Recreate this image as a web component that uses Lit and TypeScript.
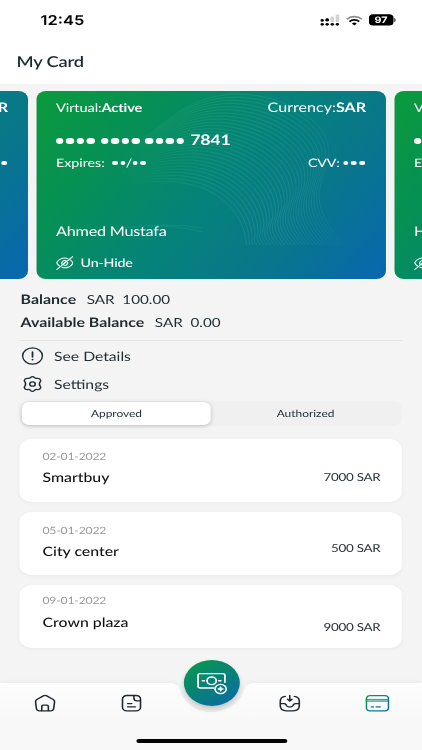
import { LitElement, html, css, svg } from "lit";
import { customElement, property } from "lit/decorators.js";

type Point = [number, number];

interface Entry {
  date: string;
  name: string;
  amount: string;
  kind: string;
}

const entries: Entry[] = [
  { date: "02-01-2022", name: "Smartbuy", amount: "7000 SAR", kind: "first" },
  { date: "05-01-2022", name: "City center", amount: "500 SAR", kind: "second" },
  { date: "09-01-2022", name: "Crown plaza", amount: "9000 SAR", kind: "third" },
];

// Decorative wave lines, blended between an inner and an outer curve.
const inner: Point[] = [[50, 104], [80, 94], [105, 89], [140, 91], [180, 95], [208, 120], [210, 154], [210, 154], [210, 154], [210, 154]];
const outer: Point[] = [[70, 72], [125, 40], [145, 4], [200, 3], [250, 3], [300, 34], [291, 68], [286, 95], [268, 110], [308, 154]];
const waveCount = 29;
const waves = Array.from({ length: waveCount }, (_, i) => {
  const t = i / (waveCount - 1);
  const [start, ...rest] = inner.map(([x, y], k) => {
    const px = x + (outer[k][0] - x) * t;
    const py = y + (outer[k][1] - y) * t;
    return `${px.toFixed(1)} ${py.toFixed(1)}`;
  });
  return `M${start} C${rest.join(" ")}`;
});

@customElement("bank-card")
export class BankCard extends LitElement {
  @property() holder = "";

  static styles = css`
    :host {
      display: block;
      flex: none;
      position: relative;
      box-sizing: border-box;
      width: calc(350px / var(--k));
      height: 188px;
      padding: 7.5px calc(20px / var(--k)) 0;
      border-radius: 8px;
      overflow: hidden;
      color: #fff;
      background: linear-gradient(125deg, #0b9a3c 0%, #059055 24%, #05837a 50%, #09768c 74%, #0868ae 98%);
    }
    .waves {
      position: absolute;
      inset: 0;
      width: 100%;
      height: 100%;
    }
    .row {
      position: relative;
      display: flex;
      align-items: baseline;
      justify-content: space-between;
      white-space: pre;
    }
    .top { line-height: 16px; font-size: 12px; }
    .top .state { letter-spacing: -0.1px; }
    .top .currency { font-size: 13.2px; }
    .number { margin-top: 16.5px; height: 18px; line-height: 18px; justify-content: flex-start; align-items: center; }
    .number b { font-size: 14.6px; font-weight: 700; letter-spacing: -0.2px; }
    .group { display: flex; gap: 2.1px; margin-right: 4.9px; }
    .group i { width: 6.4px; height: 6.4px; border-radius: 50%; background: #fff; }
    .meta { margin-top: 6.2px; height: 14px; line-height: 14px; font-size: 11.7px; }
    .meta span { display: flex; align-items: center; }
    .mini { display: flex; gap: 2px; }
    .mini i { width: 4.6px; height: 4.6px; border-radius: 50%; background: #fff; }
    .cvv { margin-right: 1px; letter-spacing: -0.1px; }
    .name { margin-top: 51.8px; line-height: 18px; font-size: 13.3px; letter-spacing: -0.18px; }
    .hide { margin-top: 16px; line-height: 14px; font-size: 11.7px; letter-spacing: -0.15px; font-weight: 500; justify-content: flex-start; align-items: center; gap: 5.8px; }
    .eye { width: 14.4px; height: 14px; }
  `;

  render() {
    const dots = (n: number) => Array.from({ length: n }, () => html`<i></i>`);
    return html`
      <svg class="waves" viewBox="0 0 350 188" preserveAspectRatio="none" fill="none" stroke="#5fc9a4">
        <defs><linearGradient id="w" gradientUnits="userSpaceOnUse" x1="85" y1="0" x2="310" y2="0">
          <stop offset="0" stop-color="#6fcfae" stop-opacity="0" />
          <stop offset=".3" stop-color="#6fcfae" stop-opacity=".14" />
          <stop offset=".7" stop-color="#6fcfae" stop-opacity=".18" />
          <stop offset="1" stop-color="#6fcfae" stop-opacity=".06" />
        </linearGradient></defs>
        ${waves.map((d) => svg`<path d=${d} stroke="url(#w)" stroke-width=".9" />`)}
        <path d="M85 137 Q 130 131 166 137M110 135 Q 140 134 166 141" stroke-opacity=".16" stroke-width=".9" />
      </svg>
      <div class="row top"><span class="state">Virtual:<b>Active</b></span><span class="currency">Currency:<b>SAR</b></span></div>
      <div class="row number"><span class="group">${dots(4)}</span><span class="group">${dots(4)}</span><span class="group">${dots(4)}</span><b>7841</b></div>
      <div class="row meta">
        <span>Expires:  <span class="mini">${dots(2)}</span>/<span class="mini">${dots(2)}</span></span>
        <span class="cvv">CVV: <span class="mini">${dots(3)}</span></span>
      </div>
      <div class="row name">${this.holder}</div>
      <div class="row hide"><svg class="eye" viewBox="0 0 14.4 14" fill="none" stroke="#fff" stroke-width="1" stroke-linecap="round">
          <path d="M9.8 2.6C5.3 .7 1.9 4 .8 6.2c-.4.8-.2 1.5 1.9 3.7M5 11.2c4.2 1.9 7.5-1.2 8.6-3.5.5-1-.4-2.4-1.8-3.7M.7 13.5 13.7.6" />
          <path d="M4.9 8.3C4 6.3 6 4 8.2 4.8M9.5 6.2c.6 1.8-1.1 3.6-2.9 3.1M5.9 8.1 8.4 5.6" />
        </svg><span>Un-Hide</span></div>
    `;
  }
}

@customElement("app-root")
export class AppRoot extends LitElement {
  static styles = css`
    :host {
      --k: 1.2176;
      display: block;
      width: 422px;
      height: 750px;
      overflow: hidden;
      background: #fff;
    }
    .screen {
      display: flex;
      flex-direction: column;
      width: calc(422px / var(--k));
      height: 750px;
      transform: scaleX(1.2176);
      transform-origin: 0 0;
      font-family: Lato, "Liberation Sans", sans-serif;
      text-rendering: geometricPrecision;
      color: #1f2d33;
      background: #f4f4f4;
    }
    .head { height: 84px; background: #fff; }
    .status {
      display: flex;
      align-items: center;
      justify-content: space-between;
      height: 40px;
      padding: 0 calc(26.5px / var(--k)) 0 calc(40.6px / var(--k));
      color: #000;
    }
    .clock { font: 600 13.5px/16px Inter, sans-serif; margin-top: 1.4px; }
    .signals { display: flex; align-items: center; gap: 5px; }
    .signals svg { display: block; }
    .title { margin: 11.5px 0 0 calc(16.5px / var(--k)); font-size: 15px; line-height: 20px; font-weight: 600; letter-spacing: -0.15px; color: #1b2a31; }
    .carousel { display: flex; justify-content: center; gap: calc(8px / var(--k)); margin-top: 7px; overflow: hidden; flex: none; }
    .body { padding: 0 calc(20px / var(--k)); }
    .sum { display: flex; align-items: baseline; gap: 8.6px; padding-left: 0.5px; height: 16px; line-height: 16px; font-size: 12.5px; white-space: pre; }
    .sum b { font-size: 13.1px; font-weight: 700; }
    .sum.one { margin-top: 11.7px; }
    .sum.two { margin-top: 7.3px; }
    .rule { height: 1px; margin-top: 9.8px; background: #e4e4e4; }
    .link { display: flex; align-items: center; height: 18px; line-height: 18px; font-size: 12.9px; padding-left: 0.6px; }
    .link svg { width: 19.4px; height: 20px; margin-right: 8px; flex: none; }
    .link.details { margin-top: 6.4px; }
    .link.settings { margin-top: 9.7px; }
    .tabs { display: flex; box-sizing: border-box; height: 25px; margin-top: 8.5px; padding: 1px calc(2px / var(--k)); border-radius: 7px; background: #f0f0f0; font-size: 9.8px; }
    .tab { flex: 1; line-height: 24.6px; text-align: center; border-radius: 6px; }
    .tab.on { background: #fff; box-shadow: 0 1px 4px rgba(0, 0, 0, 0.22); }
    .list { display: flex; flex-direction: column; gap: 10px; margin-top: 12.6px; }
    .entry { box-sizing: border-box; display: flex; justify-content: space-between; height: 63px; padding: 0 calc(21.5px / var(--k)) 0 calc(22.5px / var(--k)); border-radius: 10px; background: #fff; box-shadow: 0 1px 4px rgba(0, 0, 0, 0.045); }
    .date { margin-top: 12.3px; line-height: 13px; font-size: 10px; letter-spacing: -0.15px; color: #97999b; }
    .shop { margin-top: 3.5px; line-height: 18px; font-size: 13px; color: #111; font-weight: 500; }
    .amount { margin-top: 30.8px; line-height: 16px; font-size: 11px; letter-spacing: -0.2px; }
    .second .date { margin-top: 13px; }
    .second .shop { margin-top: 4.5px; }
    .second .amount { margin-top: 29.4px; }
    .third .date { margin-top: 10.3px; }
    .third .shop { margin-top: 4.8px; }
    .third .amount { margin-top: 34.8px; }
    .nav { position: relative; height: 67px; margin-top: auto; flex: none; }
    .shape { position: absolute; left: 0; top: -3px; width: 100%; height: 70px; filter: drop-shadow(0 -1px 2px rgba(0, 0, 0, 0.04)); }
    .items { position: relative; display: flex; justify-content: space-between; padding: 9.5px calc(32.3px / var(--k)) 0; }
    .items svg { width: 20px; height: 20px; }
    .gap { width: 6px; }
    .fab { position: absolute; left: calc(183.3px / var(--k)); top: -23.5px; display: grid; place-items: center; width: 46px; height: 46px; border-radius: 50%; background: linear-gradient(145deg, #0a9650 10%, #077f7d 55%, #0968aa 100%); box-shadow: 0 3px 5px rgba(0, 0, 0, 0.2); }
    .fab svg { width: 26px; height: 24px; }
    .pill { position: absolute; left: calc(136px / var(--k)); top: 56px; width: calc(151px / var(--k)); height: 4px; border-radius: 2px; background: #000; }
  `;

  render() {
    return html`
      <div class="screen">
        <div class="head">
          <div class="status">
            <span class="clock">12:45</span>
            <span class="signals">
              <svg width="16" height="12" viewBox="0 0 16 12">
                <g fill="#d2d2d2"><rect x="8.4" y="2.6" width="2.9" height="5.6" rx="1" /><rect x="12.7" y=".4" width="2.9" height="7.8" rx="1" /></g>
                <g><circle cx="1.6" cy="6.4" r="1.4" /><circle cx="5.7" cy="6.2" r="1.4" /><circle cx="5.7" cy="5.6" r="1.4" />
                <circle cx="1.6" cy="10.3" r="1.4" /><circle cx="5.7" cy="10.3" r="1.4" /><circle cx="9.9" cy="10.3" r="1.4" /><circle cx="14.1" cy="10.3" r="1.4" /></g>
              </svg>
              <svg width="14" height="11" viewBox="0 0 14 11" fill="none" stroke="#000" stroke-width="1.6">
                <path d="M.8 4.3a8.6 8.6 0 0 1 12.4 0" stroke="#8a8a8a" />
                <path d="M3 6.6a5.6 5.6 0 0 1 8 0" />
                <path d="M5 8.5a2.9 2.9 0 0 1 4 0L7 10.6z" fill="#000" stroke="none" />
              </svg>
              <svg width="22" height="12" viewBox="0 0 22 12">
                <rect x="0" y=".2" width="20.2" height="11.4" rx="3.6" />
                <path d="M20.9 4v4c1.4-.5 1.4-3.5 0-4z" />
                <text x="10" y="9.1" text-anchor="middle" fill="#fff" font-family="Inter, sans-serif" font-weight="700" font-size="8.8">97</text>
              </svg>
            </span>
          </div>
          <div class="title">My Card</div>
        </div>
        <div class="carousel">
          <bank-card holder="Ahmed Mustafa"></bank-card>
          <bank-card holder="Ahmed Mustafa"></bank-card>
          <bank-card holder="Hamed Mustafa"></bank-card>
        </div>
        <div class="body">
          <div class="sum one"><b>Balance</b><span>SAR  100.00</span></div>
          <div class="sum two"><b>Available Balance</b><span>SAR  0.00</span></div>
          <div class="rule"></div>
          <div class="link details">
            <svg viewBox="0 0 20 20" fill="none" stroke="#1f2d33" stroke-width="1.2" stroke-linecap="round">
              <circle cx="10" cy="10" r="8.4" />
              <path d="M10 5.8v5.2" stroke-width="1.5" /><path d="M10 13.8v.1" stroke-width="1.7" />
            </svg>See Details
          </div>
          <div class="link settings">
            <svg viewBox="0 0 20 20" fill="none" stroke="#1f2d33" stroke-width="1.3" stroke-linejoin="round">
              <circle cx="10" cy="10" r="2.3" />
              <path d="M8.5 3.1c.8-1 2.2-1 3 0 .6.9 1.3 1.3 2.4 1.1 1.3-.2 2.5.4 2.9 1.6.3.7.2 1.2-.3 1.9-.7 1.1-.8 3.2 0 4.5.5.7.6 1.3.3 1.9-.4 1.2-1.6 1.8-2.9 1.6-1.1-.2-1.8.2-2.4 1.1-.8 1-2.2 1-3 0-.6-.9-1.3-1.3-2.4-1.1-1.3.2-2.5-.4-2.9-1.6-.3-.7-.2-1.2.3-1.9.8-1.3.8-3.2 0-4.5-.5-.7-.6-1.2-.3-1.9.4-1.2 1.6-1.8 2.9-1.6 1.1.2 1.8-.2 2.4-1.1z" />
            </svg>Settings
          </div>
          <div class="tabs"><div class="tab on">Approved</div><div class="tab">Authorized</div></div>
          <div class="list">
            ${entries.map(
              (e) => html`<div class="entry ${e.kind}">
                <div><div class="date">${e.date}</div><div class="shop">${e.name}</div></div>
                <div class="amount">${e.amount}</div>
              </div>`
            )}
          </div>
        </div>
        <div class="nav">
          <svg class="shape" viewBox="0 0 422 70" preserveAspectRatio="none">
            <defs><linearGradient id="n" x1="0" y1="0" x2="0" y2="1"><stop offset="0" stop-color="#fdfdfd" /><stop offset=".6" stop-color="#f8f8f8" /></linearGradient></defs>
            <path fill="url(#n)" d="M0 3H168C176 3 178 5 180 10C184 24 196 32 211 32S240 24 244 10C246 5 248 3 256 3H422V70H0Z" />
          </svg>
          <div class="items">
            <svg viewBox="0 0 20 20" fill="none" stroke="#1f2730" stroke-width="1.3" stroke-linejoin="round" stroke-linecap="round">
              <path d="M8.6 2.9 3.3 6.5c-.9.6-1.2 1.5-1.1 2.5l.7 6.5c.2 1.4 1.2 2.3 2.6 2.3h9c1.4 0 2.4-.9 2.6-2.3l.7-6.5c.1-1-.2-1.9-1.1-2.5l-5.300-3.6c-.9-.6-1.9-.6-2.8 0z" />
              <path d="M7.3 17.6v-4.2c0-.8.4-1.2 1.2-1.2h3c.8 0 1.200.4 1.200 1.200v4.200" />
            </svg>
            <svg viewBox="0 0 20 20" fill="none" stroke="#1f2730" stroke-width="1.3" stroke-linecap="round">
              <rect x="2.6" y="2.5" width="14.8" height="15.3" rx="3.6" />
              <path d="M12 2.7v2.6c0 1.7 1 2.6 2.6 2.6h2.5M6.8 10.6h3.4M6.8 13.8h6.4" />
            </svg>
            <span class="gap"></span>
            <svg viewBox="0 0 20 20" fill="none" stroke="#1f2730" stroke-width="1.3" stroke-linecap="round" stroke-linejoin="round">
              <path d="M6.3 3.4C3.4 3.7 2.2 5.2 2.2 8.3v4.5c0 3.6 1.4 5 5 5h5.6c3.6 0 5-1.4 5-5V8.3c0-3.1-1.2-4.6-4.1-4.9" />
              <path d="M2.4 10.6h2.9c.7 0 1.3.4 1.6 1l.7 1.4c.3.5.8.8 1.3.8h2.2c.5 0 1-.3 1.3-.8l.7-1.4c.3-.6.9-1 1.6-1h2.9M10 2.5v5.4M8.2 6.3 10 8.1l1.8-1.8" />
            </svg>
            <svg viewBox="0 0 20 20" fill="none" stroke="url(#c)" stroke-width="1.3" stroke-linecap="round">
              <defs><linearGradient id="c" gradientUnits="userSpaceOnUse" x1="2" y1="3" x2="16" y2="18"><stop offset="0" stop-color="#0a9a4a" /><stop offset=".55" stop-color="#0a7f86" /><stop offset="1" stop-color="#0d6aa6" /></linearGradient></defs>
              <rect x=".9" y="2.6" width="18.2" height="15.2" rx="3" />
              <path d="M1 6.4h18v1.8H1z" fill="url(#c)" fill-opacity=".35" stroke-width=".7" /><path d="M5 13.9h1.6M9 13.9h3.2" />
            </svg>
          </div>
          <div class="fab">
            <svg viewBox="0 0 26 24" fill="none" stroke="#fff" stroke-width="1.4" stroke-linecap="round">
              <path d="M14.6 17H3.4c-1 0-1.7-.7-1.700-1.700V4.300c0-1 .7-1.700 1.700-1.700h18.600c1 0 1.700.7 1.700 1.700v7" />
              <circle cx="12.800" cy="9.8" r="3.8" /><path d="M5.2 9.8h1.700M18.700 9.8h1.700" />
              <circle cx="20.2" cy="18" r="4.6" /><path d="M20.2 16.2v3.6M18.4 18h3.6" stroke-width="1.6" />
            </svg>
          </div>
          <div class="pill"></div>
        </div>
      </div>
    `;
  }
}
